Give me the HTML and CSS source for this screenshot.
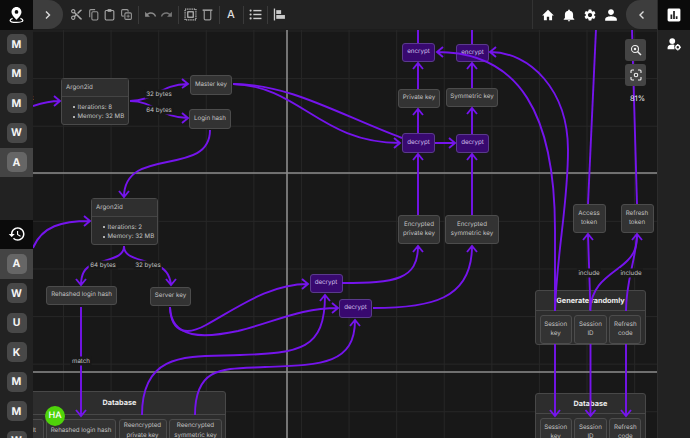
FILE: index.html
```html
<!DOCTYPE html>
<html lang="en">
<head>
    <meta charset="UTF-8">
    <title>Diagram editor</title>
    <link rel="stylesheet" href="styles.css">
</head>
<body>
<div class="app">
    <aside class="left">
        <div class="logo-cell">
            <svg class="logo" viewBox="0 0 24 24"><path d="M12 1.500c-3.900 0-7 3-7 6.900 0 4.600 5 8.800 7 11 2-2.200 7-6.400 7-11 0-3.900-3.100-6.900-7-6.900zm0 9.500a2.600 2.600 0 1 1 0-5.200 2.600 2.600 0 0 1 0 5.200z" fill="#fff"/><path d="M6.500 17.500C4.500 18.200 3 19.200 3 20.300c0 1.500 4 2.700 9 2.700s9-1.200 9-2.700c0-1.100-1.500-2.100-3.500-2.800" fill="none" stroke="#fff" stroke-width="1.800"/></svg>
        </div>
        <div class="chip-cell"><span class="chip">M</span></div>
        <div class="chip-cell"><span class="chip">M</span></div>
        <div class="chip-cell"><span class="chip">M</span></div>
        <div class="chip-cell"><span class="chip">W</span></div>
        <div class="chip-cell on"><span class="chip">A</span></div>
        <div class="side-gap"></div>
        <div class="logo-cell">
            <svg class="logo logo-big" viewBox="0 0 24 24"><path fill="#fff" d="M13 3c-4.970 0-9 4.030-9 9H1l3.890 3.890.07.14L9 12H6c0-3.870 3.130-7 7-7s7 3.130 7 7-3.130 7-7 7c-1.930 0-3.680-.79-4.940-2.060l-1.420 1.420C8.270 19.990 10.510 21 13 21c4.970 0 9-4.030 9-9s-4.030-9-9-9zm-1 5v5l4.280 2.540.72-1.210-3.500-2.080V8H12z"/></svg>
        </div>
        <div class="chip-cell on"><span class="chip">A</span></div>
        <div class="chip-cell"><span class="chip">W</span></div>
        <div class="chip-cell"><span class="chip">U</span></div>
        <div class="chip-cell"><span class="chip">K</span></div>
        <div class="chip-cell"><span class="chip">M</span></div>
        <div class="chip-cell"><span class="chip">M</span></div>
        <div class="chip-cell"><span class="chip">W</span></div>
    </aside>

    <header class="topbar">
        <div class="tab tab-open">
            <svg class="chev" viewBox="0 0 10 10"><path d="M3 1.500 6.500 5 3 8.500" fill="none" stroke="#ddd" stroke-width="1.400"/></svg>
        </div>
        <div class="tools">
            <svg class="ico" viewBox="0 0 24 24"><path fill="#aaa" d="M9.640 7.640c.23-.5.36-1.050.36-1.640 0-2.210-1.790-4-4-4S2 3.790 2 6s1.790 4 4 4c.59 0 1.140-.13 1.640-.36L10 12l-2.360 2.360C7.140 14.130 6.590 14 6 14c-2.210 0-4 1.790-4 4s1.790 4 4 4 4-1.790 4-4c0-.59-.13-1.140-.36-1.640L12 14l7 7h3v-1L9.640 7.640zM6 8c-1.100 0-2-.89-2-2s.9-2 2-2 2 .89 2 2-.9 2-2 2zm0 12c-1.100 0-2-.89-2-2s.9-2 2-2 2 .89 2 2-.9 2-2 2zm13-17-6 6 2 2 7-7V3h-3z"/></svg>
            <svg class="ico" viewBox="0 0 24 24" fill="none" stroke="#999" stroke-width="2"><path d="M5 17V5a2 2 0 0 1 2-2h8"/><rect x="9" y="7" width="11" height="15" rx="2"/></svg>
            <svg class="ico" viewBox="0 0 24 24" fill="none" stroke="#aaa" stroke-width="2"><rect x="4" y="4.500" width="16" height="17.500" rx="2"/><rect x="8.500" y="2" width="7" height="5" fill="#aaa" stroke="none"/></svg>
            <svg class="ico" viewBox="0 0 24 24" fill="none" stroke="#999" stroke-width="2"><path d="M7 15H5a2 2 0 0 1-2-2V5a2 2 0 0 1 2-2h8a2 2 0 0 1 2 2v2"/><rect x="9" y="9" width="12" height="12" rx="2"/><path d="M15 12v6M12 15h6" stroke-width="1.500"/></svg>
            <i class="sep"></i>
            <svg class="ico" viewBox="0 0 24 24"><path fill="#8a8a8a" d="M12.500 8c-2.650 0-5.050.99-6.900 2.600L2 7v9h9l-3.620-3.620c1.390-1.160 3.160-1.880 5.120-1.880 3.540 0 6.550 2.310 7.600 5.500l2.370-.78C21.080 11.030 17.150 8 12.500 8z"/></svg>
            <svg class="ico" viewBox="0 0 24 24"><path fill="#777" d="M18.400 10.600C16.550 8.990 14.150 8 11.500 8c-4.650 0-8.580 3.030-9.960 7.220L3.900 16c1.050-3.190 4.050-5.500 7.600-5.500 1.950 0 3.730.72 5.120 1.880L13 16h9V7l-3.600 3.600z"/></svg>
            <i class="sep"></i>
            <svg class="ico" viewBox="0 0 24 24" fill="none" stroke="#ccc"><rect x="2" y="2" width="20" height="20" stroke-width="2.200" stroke-dasharray="2.200 1.800"/><rect x="7" y="7" width="10" height="10" stroke-width="2"/></svg>
            <svg class="ico" viewBox="0 0 24 24" fill="none" stroke="#999" stroke-width="2.200"><path d="M3 4h18" stroke-width="3"/><path d="M6 5v15a2 2 0 0 0 2 2h8a2 2 0 0 0 2-2V5"/></svg>
            <i class="sep"></i>
            <span class="tool-a">A</span>
            <i class="sep"></i>
            <svg class="ico" viewBox="0 0 24 24" fill="#ccc"><rect x="8" y="3.500" width="15" height="2.600"/><rect x="8" y="10.700" width="15" height="2.600"/><rect x="8" y="18" width="15" height="2.600"/><circle cx="3" cy="4.800" r="2"/><circle cx="3" cy="12" r="2"/><circle cx="3" cy="19.200" r="2"/></svg>
            <i class="sep"></i>
            <svg class="ico" viewBox="0 0 24 24" fill="#ccc"><rect x="1.500" y="1" width="2.400" height="22"/><rect x="6" y="4" width="9" height="7"/><rect x="6" y="13" width="16" height="7"/></svg>
        </div>
        <div class="actions">
            <svg class="ico ico-lg" viewBox="0 0 24 24"><path fill="#fff" d="M10 21v-6h4v6h5v-8h3L12 3 2 13h3v8z"/></svg>
            <svg class="ico ico-lg" viewBox="0 0 24 24"><path fill="#fff" d="M12 23c1.100 0 2-.9 2-2h-4c0 1.100.89 2 2 2zm7-6v-6c0-3.070-1.640-5.640-5.500-6.320V4c0-.83-.67-1.500-1.500-1.500s-1.500.67-1.500 1.500v.68C6.630 5.360 5 7.920 5 11v6l-2 2v1h18v-1l-2-2z"/></svg>
            <svg class="ico ico-lg" viewBox="0 0 24 24"><path fill="#fff" d="M19.140 12.940c.04-.3.06-.61.06-.94 0-.32-.02-.64-.07-.94l2.030-1.580a.49.49 0 0 0 .12-.61l-1.920-3.320a.488.488 0 0 0-.59-.22l-2.390.96c-.5-.38-1.030-.7-1.620-.94l-.36-2.540a.484.484 0 0 0-.48-.41h-3.840c-.24 0-.43.17-.47.41l-.36 2.540c-.59.24-1.130.57-1.620.94l-2.390-.96c-.22-.08-.47 0-.59.22L2.740 8.870c-.12.21-.08.47.12.61l2.030 1.580c-.05.3-.09.63-.09.94s.02.64.07.94l-2.030 1.580a.49.49 0 0 0-.12.61l1.920 3.320c.12.22.37.29.59.22l2.390-.96c.5.38 1.030.7 1.620.94l.36 2.540c.05.24.24.41.48.41h3.840c.24 0 .44-.17.47-.41l.36-2.540c.59-.24 1.130-.56 1.620-.94l2.390.96c.22.08.47 0 .59-.22l1.920-3.320c.12-.22.07-.47-.12-.61l-2.010-1.580zM12 15.600c-1.980 0-3.600-1.620-3.600-3.600s1.620-3.600 3.600-3.600 3.600 1.620 3.600 3.600-1.620 3.600-3.600 3.600z"/></svg>
            <svg class="ico ico-lg" viewBox="0 0 24 24"><path fill="#fff" d="M12 12c2.760 0 5-2.240 5-5s-2.240-5-5-5-5 2.240-5 5 2.240 5 5 5zm0 2c-3.340 0-10 1.340-10 5v2.500c0 .3.200.5.500.5h19c.3 0 .5-.2.500-.5V19c0-3.660-6.660-5-10-5z"/></svg>
        </div>
        <div class="tab tab-close">
            <svg class="chev" viewBox="0 0 10 10"><path d="M6.500 1.500 3 5l3.500 3.500" fill="none" stroke="#ddd" stroke-width="1.400"/></svg>
        </div>
    </header>

    <main class="canvas">
        <div class="node box argon-a">
            <div class="box-title">Argon2id</div>
            <ul><li>Iterations: 8</li><li>Memory: 32 MB</li></ul>
        </div>
        <div class="node box argon-b">
            <div class="box-title">Argon2id</div>
            <ul><li>Iterations: 2</li><li>Memory: 32 MB</li></ul>
        </div>

        <div class="node key master">Master key</div>
        <div class="node key login">Login hash</div>
        <div class="node key rehash">Rehashed login hash</div>
        <div class="node key server">Server key</div>
        <div class="node key priv">Private key</div>
        <div class="node key sym">Symmetric key</div>
        <div class="node key enc-priv">Encrypted<br>private key</div>
        <div class="node key enc-sym">Encrypted<br>symmetric key</div>
        <div class="node key access">Access<br>token</div>
        <div class="node key refresh">Refresh<br>token</div>

        <div class="node op enc-a">encrypt</div>
        <div class="node op enc-b">encrypt</div>
        <div class="node op dec-a">decrypt</div>
        <div class="node op dec-b">decrypt</div>
        <div class="node op dec-c">decrypt</div>
        <div class="node op dec-d">decrypt</div>

        <section class="group group-gen">
            <h3>Generate randomly</h3>
            <div class="cells"><div>Session<br>key</div><div>Session<br>ID</div><div>Refresh<br>code</div></div>
        </section>
        <section class="group group-db2">
            <h3>Database</h3>
            <div class="cells"><div>Session<br>key</div><div>Session<br>ID</div><div>Refresh<br>code</div></div>
        </section>
        <section class="group group-db1">
            <h3>Database</h3>
            <div class="cells">
                <div class="c-salt">Salt</div>
                <div class="c-hash">Rehashed login hash</div>
                <div class="c-priv">Reencrypted<br>private key</div>
                <div class="c-sym">Reencrypted<br>symmetric key</div>
            </div>
        </section>

        <!-- coordinates below are page pixels, viewBox starts at the canvas corner -->
        <svg class="wires" viewBox="33 29 624 409">
            <g class="major">
                <path d="M287 29V438M33 173H657M33 372H657"/>
            </g>
            <g class="wire">
                <path d="M33 106C42 103 50 101 60 101M54 96l6 5-6 5"/>
                <path d="M130 101C155 101 160 84 188 84M182 79l6 5-6 4"/>
                <path d="M130 101C155 101 160 118 188 118M182 113l6 5-6 5"/>
                <path d="M233 84C290 84 340 115 402 138"/>
                <path d="M233 84C300 86 320 143 400 143M394 138l6 5-6 5"/>
                <path d="M210 130C210 178 124 145 124 197M119 191l5 6 5-6"/>
                <path d="M33 248C42 226 62 221 90 221M84 216l6 5-6 5"/>
                <path d="M124 246C124 258 110 258 92 265C84 268 81 275 81 285M76 279l5 6 5-6"/>
                <path d="M124 246C124 258 138 258 155 265C166 268 170 275 171 285M166 279l5 6 5-6"/>
                <path d="M81 307V416M76 410l5 6 5-6"/>
                <path d="M170 307C171 336 190 334 206 325C240 306 270 284 308 284M302 279l6 5-6 5"/>
                <path d="M170 307C171 340 205 338 238 331C275 322 300 308 338 308M332 303l6 5-6 5"/>
                <path d="M142 415C142 350 190 357 240 355C300 353 325 350 325 295M320 301l5-6 5 6"/>
                <path d="M195 415C195 365 225 369 265 367C320 365 355 365 355 320M350 326l5-6 5 6"/>
                <path d="M342 283C395 283 418 280 418 246M413 252l5-6 5 6"/>
                <path d="M373 308C430 308 472 300 472 246M467 252l5-6 5 6"/>
                <path d="M418 215V154M413 160l5-6 5 6"/>
                <path d="M472 215V154M467 160l5-6 5 6"/>
                <path d="M435 143H455M449 138l6 5-6 5"/>
                <path d="M418 133V109M413 115l5-6 5 6"/>
                <path d="M472 134V108M467 114l5-6 5 6"/>
                <path d="M418 89V63M413 69l5-6 5 6"/>
                <path d="M472 88V63M467 69l5-6 5 6"/>
                <path d="M418 43V29M472 44V29"/>
                <path d="M555 311V230C555 115 520 52 437 52M443 47l-6 5 6 5"/>
                <path d="M555 311C557 250 568 205 568 150C568 90 530 52 490 52M496 47l-6 5 6 5"/>
                <path d="M590.500 311L588 234M583 240l5-6 5 6"/>
                <path d="M590 310C592 280 615 274 628 260C636 252 637 244 637 234M632 240l5-6 5 6"/>
                <path d="M626 311C626 280 636 260 637 234"/>
                <path d="M588 204L596 29"/>
                <path d="M637 204L632 29"/>
                <path d="M555 344V416M550 410l5 6 5-6"/>
                <path d="M590.500 344V416M585.500 410l5 6 5-6"/>
                <path d="M626 344V416M621 410l5 6 5-6"/>
            </g>
        </svg>

        <span class="tag t-salt">Salt</span>
        <span class="tag t-32a">32 bytes</span>
        <span class="tag t-64a">64 bytes</span>
        <span class="tag t-64b">64 bytes</span>
        <span class="tag t-32b">32 bytes</span>
        <span class="tag t-match">match</span>
        <span class="tag t-inc-a">include</span>
        <span class="tag t-inc-b">include</span>

        <div class="avatar">HA</div>

        <div class="zoom">
            <button class="zoom-btn">
                <svg viewBox="0 0 24 24" fill="none" stroke="#eee"><circle cx="10" cy="10" r="7" stroke-width="2.200"/><circle cx="10" cy="10" r="2.500" fill="#eee" stroke="none"/><path d="M15.500 15.500 22 22" stroke-width="3"/></svg>
            </button>
            <button class="zoom-btn">
                <svg viewBox="0 0 24 24" fill="none" stroke="#eee" stroke-width="2.200"><path d="M2 8V4a2 2 0 0 1 2-2h4M16 2h4a2 2 0 0 1 2 2v4M22 16v4a2 2 0 0 1-2 2h-4M8 22H4a2 2 0 0 1-2-2v-4"/><circle cx="12" cy="12" r="3.500"/></svg>
            </button>
            <span class="zoom-val">81%</span>
        </div>
    </main>

    <aside class="right">
        <div class="logo-cell">
            <svg class="logo" viewBox="0 0 24 24"><rect x="1" y="1" width="22" height="22" rx="2.500" fill="#fff"/><path d="M6 11h3v8H6zM10.500 5h3v14h-3zM15 14h3v5h-3z" fill="#222"/></svg>
        </div>
        <div class="right-tool">
            <svg class="ico ico-lg" viewBox="0 0 24 24"><circle cx="9" cy="7" r="5" fill="#fff"/><path d="M1 21v-3c0-3 4-5 8-5 1.500 0 2.800.2 4 .7-1 2-1 5 .3 7.300z" fill="#fff"/><circle cx="18.500" cy="17.500" r="3.300" fill="none" stroke="#fff" stroke-width="2.400"/><path d="M18.500 12v2M18.500 21v2M13 17.500h2M22 17.500h2" stroke="#fff" stroke-width="2"/></svg>
        </div>
    </aside>
</div>
</body>
</html>
```

FILE: styles.css
```css
html {
    box-sizing: border-box;
    font-family: "Inter", "Liberation Sans", sans-serif;
    text-rendering: geometricPrecision;
}

*,
*:before,
*:after {
    box-sizing: inherit;
}

body {
    margin: 0;
    background: #181818;
}

.app {
    display: grid;
    grid-template-columns: 33px 1fr 33px;
    grid-template-rows: 29px 1fr;
    width: 690px;
    height: 438px;
    overflow: hidden;
}

/* sidebars */
.left {
    grid-row: 1 / 3;
    display: flex;
    flex-direction: column;
    background: #222;
    overflow: hidden;
    z-index: 2;
}

.right {
    grid-column: 3;
    grid-row: 1 / 3;
    background: #222;
    border-left: 1px solid #2c2c2c;
}

.logo-cell {
    flex: none;
    display: flex;
    align-items: center;
    justify-content: center;
    height: 29.500px;
    background: #0b0b0b;
}

.logo {
    width: 17px;
    height: 17px;
}

.logo-big {
    width: 18px;
    height: 18px;
}

.right .logo {
    width: 14px;
    height: 14px;
}

.chip-cell {
    flex: none;
    display: flex;
    align-items: center;
    justify-content: center;
    height: 29.500px;
}

.chip-cell.on {
    background: #444;
}

.chip {
    display: flex;
    align-items: center;
    justify-content: center;
    width: 20px;
    height: 20px;
    border-radius: 5px;
    background: #484848;
    color: #f4f4f4;
    font-size: 10.500px;
    font-weight: 700;
}

.on .chip {
    background: #666;
}

.side-gap {
    flex: none;
    height: 42.500px;
}

.right-tool {
    display: flex;
    justify-content: center;
    padding-top: 7px;
}

/* top toolbar */
.topbar {
    grid-column: 2;
    display: flex;
    align-items: center;
    background: #222;
    box-shadow: 0 1px 0 #1d1d1d;
    z-index: 2;
}

.tab {
    display: flex;
    align-items: center;
    justify-content: center;
    width: 30px;
    height: 29px;
    background: #3d3d3d;
}

.tab-open {
    border-radius: 0 15px 15px 0;
}

.tab-close {
    width: 31px;
    border-radius: 15px 0 0 15px;
}

.chev {
    width: 10px;
    height: 10px;
}

.tools {
    display: flex;
    align-items: center;
    gap: 3.500px;
    padding-left: 7px;
    flex: 1;
}

.ico {
    flex: none;
    width: 13px;
    height: 13px;
}

.ico-lg {
    width: 14px;
    height: 14px;
}

.sep {
    flex: none;
    width: 1px;
    height: 18px;
    margin: 0 1.500px;
    background: #3a3a3a;
}

.tool-a {
    width: 13px;
    color: #ddd;
    font-size: 11px;
    font-weight: 500;
    text-align: center;
    margin-top: -2px;
}

.actions {
    display: flex;
    align-items: center;
    gap: 7px;
    height: 29px;
    padding: 0 8.500px 0 7.500px;
    border-left: 1px solid #333;
}

/* canvas and its nodes */
.canvas {
    grid-column: 2;
    grid-row: 2;
    position: relative;
    overflow: hidden;
    background-color: #181818;
    background-image:
        linear-gradient(#262626 1px, transparent 1px),
        linear-gradient(90deg, #262626 1px, transparent 1px);
    background-size: 47.600px 47.600px;
    background-position: 30px 1.500px;
}

.wires {
    position: absolute;
    left: 0;
    top: 0;
    width: 624px;
    height: 409px;
}

.major path {
    fill: none;
    stroke: #8c8c8c;
    stroke-width: 1.600;
}

.wire path {
    fill: none;
    stroke: #7514ec;
    stroke-width: 1.900;
}

.node {
    position: absolute;
    font-size: 6.200px;
    line-height: 8.800px;
    color: #c4c4c4;
    border-radius: 3px;
    text-align: center;
}

.key {
    display: flex;
    align-items: center;
    justify-content: center;
    background: #333;
    border: 1px solid #4c4c4c;
}

.op {
    display: flex;
    align-items: center;
    justify-content: center;
    background: #38096f;
    border: 1px solid #5a3a8c;
    color: #d3c0ee;
}

.box {
    background: #2b2b2b;
    border: 1px solid #4a4a4a;
    text-align: left;
}

.box-title {
    height: 18px;
    line-height: 18px;
    padding-left: 4px;
    background: #2f2f2f;
    border-bottom: 1px solid #444;
}

.box ul {
    margin: 0;
    padding: 5.500px 0 0 15.500px;
    line-height: 9.500px;
    list-style: none;
}

.box li {
    position: relative;
}

.box li:before {
    content: "";
    position: absolute;
    left: -5px;
    top: 3.500px;
    width: 2px;
    height: 2px;
    border-radius: 50%;
    background: #ddd;
}

.argon-a { left: 28px; top: 49px; width: 68px; height: 47px; }
.argon-b { left: 58px; top: 169px; width: 67px; height: 47px; }
.master { left: 157px; top: 46px; width: 42px; height: 20px; }
.login { left: 156px; top: 80px; width: 42px; height: 20px; }
.rehash { left: 13px; top: 257px; width: 71px; height: 19px; }
.server { left: 117px; top: 258px; width: 41px; height: 19px; }
.priv { left: 365px; top: 60px; width: 42px; height: 19px; }
.sym { left: 413px; top: 59px; width: 52px; height: 19px; }
.enc-priv { left: 365px; top: 186px; width: 42px; height: 29px; }
.enc-sym { left: 412px; top: 186px; width: 54px; height: 29px; }
.access { left: 539.500px; top: 175px; width: 33px; height: 29px; }
.refresh { left: 587.500px; top: 175px; width: 33px; height: 29px; }
.enc-a { left: 369px; top: 14px; width: 33px; height: 19px; }
.enc-b { left: 423px; top: 15px; width: 33px; height: 18px; }
.dec-a { left: 369px; top: 104px; width: 33px; height: 20px; }
.dec-b { left: 423px; top: 105px; width: 33px; height: 19px; }
.dec-c { left: 276.500px; top: 245px; width: 33px; height: 19px; }
.dec-d { left: 306px; top: 270px; width: 33px; height: 19px; }

.group {
    position: absolute;
    background: #2d2d2d;
    border: 1px solid #484848;
    border-radius: 3px;
    font-size: 6.200px;
    color: #c4c4c4;
    text-align: center;
}

.group h3 {
    margin: 0;
    height: 20px;
    line-height: 19px;
    font-size: 7.300px;
    font-weight: 700;
    color: #eee;
    border-bottom: 1px solid #484848;
}

.cells {
    display: flex;
    gap: 2.500px;
    padding: 3.500px;
    line-height: 9.500px;
}

.cells > div {
    flex: 1;
    display: flex;
    align-items: center;
    justify-content: center;
    height: 29px;
    background: #333;
    border: 1px solid #4c4c4c;
    border-radius: 3px;
}

.group-gen { left: 502px; top: 261px; width: 111px; height: 55px; }
.group-db2 { left: 502px; top: 364px; width: 111px; height: 60px; }
.group-db1 { left: -20px; top: 362px; width: 213px; height: 70px; }

.group-db1 h3 {
    height: 23px;
    line-height: 22px;
}

.group-db1 .cells > div {
    flex: none;
    height: 24px;
}

.cells .c-salt { width: 26px; }
.cells .c-hash { width: 70px; }
.cells .c-priv { width: 48px; }
.cells .c-sym { width: 53px; }

.tag {
    position: absolute;
    padding: 0 1.500px;
    background: #181818;
    color: #c4c4c4;
    font-size: 6.200px;
    line-height: 9px;
    white-space: nowrap;
    transform: translate(-50%, -50%);
}

.t-salt { left: -5px; top: 69px; }
.t-32a { left: 126px; top: 64.500px; }
.t-64a { left: 126px; top: 81px; }
.t-64b { left: 70px; top: 236px; }
.t-32b { left: 115px; top: 236px; }
.t-match { left: 48px; top: 332px; }
.t-inc-a { left: 556px; top: 244px; }
.t-inc-b { left: 598px; top: 244px; }

.avatar {
    position: absolute;
    left: 12px;
    top: 377px;
    width: 20px;
    height: 20px;
    border-radius: 50%;
    background: #4fd40a;
    color: #fff;
    font-size: 9px;
    font-weight: 500;
    line-height: 20px;
    text-align: center;
}

.zoom {
    position: absolute;
    left: 592px;
    top: 10px;
    display: flex;
    flex-direction: column;
    align-items: center;
    gap: 3px;
    width: 21px;
}

.zoom-btn {
    display: flex;
    align-items: center;
    justify-content: center;
    width: 21px;
    height: 22px;
    padding: 0;
    border: 0;
    border-radius: 3px;
    background: #444;
}

.zoom-btn svg {
    width: 12px;
    height: 12px;
}

.zoom-val {
    margin: 5px 0 0 4px;
    color: #eee;
    font-size: 7.500px;
    line-height: 9px;
}
```
